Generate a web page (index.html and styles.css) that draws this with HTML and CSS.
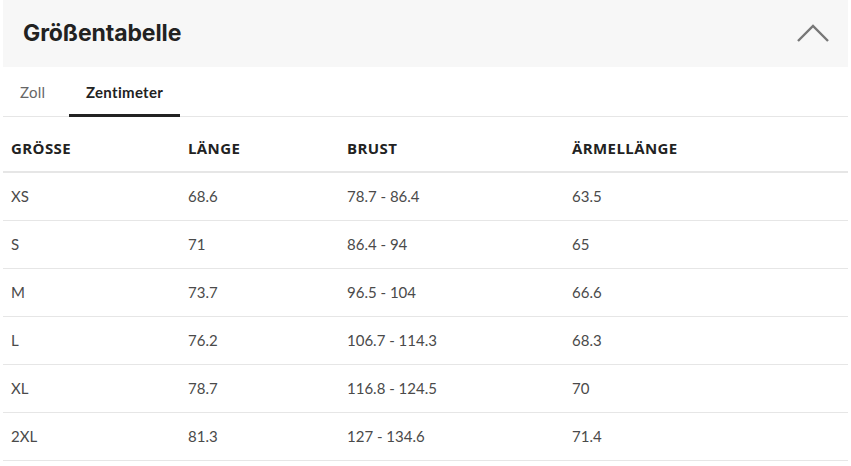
FILE: index.html
```html
<!DOCTYPE html>
<html lang="de">
<head>
<meta charset="utf-8">
<title>Größentabelle</title>
<link rel="stylesheet" href="styles.css">
</head>
<body>
<div class="panel">
  <div class="panel-head">
    <h2 class="panel-title">Größentabelle</h2>
    <svg class="chevron" width="32" height="20" viewBox="0 0 32 20"><polyline points="1,18 16,3 31,18" fill="none" stroke="#777" stroke-width="2.4"/></svg>
  </div>
  <div class="tabs">
    <span class="tab tab-zoll">Zoll</span>
    <span class="tab tab-active">Zentimeter</span>
  </div>
  <table class="sizes">
    <colgroup>
      <col class="c1"><col class="c2"><col class="c3"><col class="c4">
    </colgroup>
    <thead>
      <tr><th>GRÖSSE</th><th>LÄNGE</th><th>BRUST</th><th>ÄRMELLÄNGE</th></tr>
    </thead>
    <tbody>
      <tr><td>XS</td><td>68.6</td><td>78.7 - 86.4</td><td>63.5</td></tr>
      <tr><td>S</td><td>71</td><td>86.4 - 94</td><td>65</td></tr>
      <tr><td>M</td><td>73.7</td><td>96.5 - 104</td><td>66.6</td></tr>
      <tr><td>L</td><td>76.2</td><td>106.7 - 114.3</td><td>68.3</td></tr>
      <tr><td>XL</td><td>78.7</td><td>116.8 - 124.5</td><td>70</td></tr>
      <tr><td>2XL</td><td>81.3</td><td>127 - 134.6</td><td>71.4</td></tr>
    </tbody>
  </table>
</div>
</body>
</html>
```

FILE: styles.css
```css
html, body {
  margin: 0;
  padding: 0;
  background: #fff;
}
body {
  font-family: Lato, "Liberation Sans", sans-serif;
  color: #4a4a4a;
}
.panel {
  margin: 0 3px;
  width: 845px;
}
.panel-head {
  height: 67px;
  background: #f7f7f7;
  display: flex;
  align-items: center;
  justify-content: space-between;
  padding: 0 19px 0 20px;
  box-sizing: border-box;
}
.panel-title {
  margin: 0 0 1px;
  font-family: Inter, sans-serif;
  font-weight: 700;
  font-size: 23px;
  letter-spacing: -0.1px;
  color: #222;
}
.chevron {
  display: block;
  margin-top: -1px;
}
.tabs {
  display: flex;
  height: 50px;
  border-bottom: 1px solid #e6e6e6;
  box-sizing: border-box;
  align-items: stretch;
}
.tab {
  display: flex;
  align-items: center;
  padding: 0 17px;
  font-size: 15px;
  letter-spacing: 0.3px;
  color: #666;
  box-sizing: border-box;
}
.tab-zoll {
  width: 66px;
}
.tab-active {
  width: 111px;
  font-weight: 700;
  color: #222;
  border-bottom: 3px solid #222;
  margin-bottom: -1px;
  padding-top: 3px;
}
.sizes {
  width: 845px;
  border-collapse: collapse;
  table-layout: fixed;
}
.c1 { width: 177px; }
.c2 { width: 159px; }
.c3 { width: 225px; }
.c4 { width: 284px; }
.sizes th {
  font-family: "Open Sans", sans-serif;
  font-weight: 700;
  font-size: 15px;
  letter-spacing: 0.4px;
  color: #222;
  text-align: left;
  height: 55px;
  padding: 7px 8px 0;
  border-bottom: 2px solid #e6e6e6;
  box-sizing: border-box;
}
.sizes td {
  font-size: 15px;
  color: #4a4a4a;
  height: 48px;
  padding: 0 8px;
  border-bottom: 1px solid #e6e6e6;
  box-sizing: border-box;
}
```
